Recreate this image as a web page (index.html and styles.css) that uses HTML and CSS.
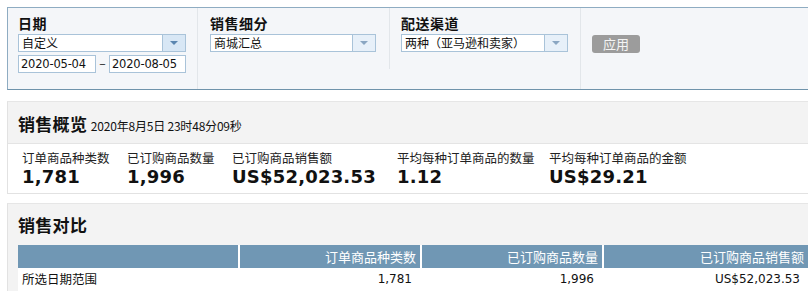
FILE: index.html
```html
<!DOCTYPE html>
<html lang="zh">
<head>
<meta charset="utf-8">
<link rel="stylesheet" href="styles.css">
</head>
<body>
<div class="filters">
  <div class="fcol fcol-date">
    <div class="flabel">日期</div>
    <div class="select w168"><span class="stext">自定义</span><span class="sbtn"><i></i></span></div>
    <div class="dates">
      <span class="dinput">2020-05-04</span>
      <span class="dash">–</span>
      <span class="dinput d2">2020-08-05</span>
    </div>
  </div>
  <div class="fcol fcol-mid">
    <div class="flabel">销售细分</div>
    <div class="select w166"><span class="stext">商城汇总</span><span class="sbtn pale"><i></i></span></div>
  </div>
  <div class="fcol fcol-mid2">
    <div class="flabel">配送渠道</div>
    <div class="select w167"><span class="stext">两种（亚马逊和卖家）</span><span class="sbtn pale"><i></i></span></div>
  </div>
  <div class="fcol fcol-btn">
    <span class="apply">应用</span>
  </div>
</div>

<div class="panel overview">
  <div class="phead">
    <span class="ptitle">销售概览</span>
    <span class="ptime">2020年8月5日 23时48分09秒</span>
  </div>
  <div class="metrics">
    <div class="metric m1"><div class="mlabel">订单商品种类数</div><div class="mval">1,781</div></div>
    <div class="metric m2"><div class="mlabel">已订购商品数量</div><div class="mval">1,996</div></div>
    <div class="metric m3"><div class="mlabel">已订购商品销售额</div><div class="mval">US$52,023.53</div></div>
    <div class="metric m4"><div class="mlabel">平均每种订单商品的数量</div><div class="mval">1.12</div></div>
    <div class="metric m5"><div class="mlabel">平均每种订单商品的金额</div><div class="mval">US$29.21</div></div>
  </div>
</div>

<div class="panel compare">
  <div class="chead"><span class="ptitle">销售对比</span></div>
  <div class="ctable">
    <div class="crow hrow">
      <div class="cc c0"></div>
      <div class="cc c1">订单商品种类数</div>
      <div class="cc c2">已订购商品数量</div>
      <div class="cc c3">已订购商品销售额</div>
    </div>
    <div class="crow drow">
      <div class="cc c0">所选日期范围</div>
      <div class="cc c1">1,781</div>
      <div class="cc c2">1,996</div>
      <div class="cc c3">US$52,023.53</div>
    </div>
  </div>
</div>
</body>
</html>
```

FILE: styles.css
```css
html, body {
  margin: 0;
  padding: 0;
  background: #fff;
  overflow: hidden;
}
body {
  width: 808px;
  height: 291px;
  padding: 7px 0 0 7px;
  box-sizing: border-box;
  font-family: "Noto Sans CJK SC", "DejaVu Sans", sans-serif;
  color: #111;
}
.filters {
  display: flex;
  width: 840px;
  height: 83px;
  box-sizing: border-box;
  background: #f4f6f9;
  border-top: 1px solid #8eacc2;
  border-bottom: 1px solid #6f93ab;
  border-left: 1px solid #8eacc2;
}
.fcol {
  box-sizing: border-box;
  padding: 5px 0 0 10px;
  border-right: 1px solid #e2e6ea;
}
.fcol-date { width: 190px; }
.fcol-mid { width: 192px; padding-left: 12px; height: 61px; border-right: 1px solid #e2e6ea; }
.fcol-mid2 { width: 191px; padding-left: 11px; }
.fcol-btn { border-right: none; padding: 22px 0 0 11px; }
.flabel {
  font-size: 14px;
  font-weight: bold;
  line-height: 20px;
  height: 21px;
  letter-spacing: 0.5px;
}
.select {
  display: flex;
  height: 18px;
  box-sizing: border-box;
  background: #fff;
  border: 1px solid #a9c3d9;
}
.w168 { width: 168px; }
.w166 { width: 166px; }
.w167 { width: 167px; }
.stext {
  flex: 1;
  font-size: 12px;
  line-height: 16px;
  padding-left: 3px;
  white-space: nowrap;
  overflow: hidden;
}
.sbtn {
  width: 22px;
  background: #d8e7f5;
  border-left: 1px solid #a9c3d9;
  display: flex;
  align-items: center;
  justify-content: center;
}
.sbtn.pale { background: #e7f0f9; }
.sbtn i {
  width: 0;
  height: 0;
  border-left: 4px solid transparent;
  border-right: 4px solid transparent;
  border-top: 4px solid #5b86b0;
}
.sbtn.pale i { border-top-color: #8aa6c2; }
.dates {
  display: flex;
  align-items: center;
  margin-top: 3px;
}
.dinput {
  display: inline-block;
  width: 78px;
  height: 18px;
  box-sizing: border-box;
  background: #fff;
  border: 1px solid #a9c3d9;
  font-family: "DejaVu Sans", sans-serif;
  font-size: 11.5px;
  line-height: 16px;
  padding-left: 2px;
  letter-spacing: -0.2px;
}
.dinput.d2 { width: 77px; }
.dash {
  width: 13px;
  height: 18px;
  text-align: center;
  font-size: 12px;
  line-height: 16px;
}
.apply {
  display: inline-block;
  width: 48px;
  height: 18px;
  border-radius: 3px;
  background: #9c9c9c;
  color: #f4f4f4;
  font-size: 13px;
  line-height: 18px;
  text-align: center;
}
.panel {
  width: 840px;
  box-sizing: border-box;
  border-left: 1px solid #e2e2e2;
  border-top: 1px solid #e6e6e6;
}
.overview {
  margin-top: 11px;
  border-bottom: 1px solid #e2e2e2;
}
.phead {
  height: 42px;
  box-sizing: border-box;
  background: #f3f3f3;
  border-bottom: 1px solid #e4e4e4;
  padding: 10px 0 0 10px;
  white-space: nowrap;
}
.ptitle {
  font-size: 17px;
  font-weight: bold;
  line-height: 24px;
  letter-spacing: 0.3px;
}
.ptime {
  font-size: 12px;
  letter-spacing: -0.2px;
}
.metrics {
  display: flex;
  height: 49px;
  padding: 5px 0 0 14px;
  box-sizing: border-box;
  background: #fff;
}
.metric { white-space: nowrap; }
.m1 { width: 105px; }
.m2 { width: 105px; }
.m3 { width: 165px; }
.m4 { width: 152px; }
.mlabel {
  font-size: 12.5px;
  line-height: 17px;
  color: #222;
}
.mval {
  font-family: "DejaVu Sans", sans-serif;
  font-weight: bold;
  font-size: 18px;
  line-height: 22px;
  letter-spacing: 0.2px;
  color: #111;
}
.compare {
  margin-top: 9px;
  background: #f3f3f3;
  height: 100px;
  padding: 0 0 0 10px;
}
.chead {
  height: 41px;
  padding-top: 9px;
  box-sizing: border-box;
}
.ctable { width: 830px; }
.crow {
  display: flex;
  gap: 2px;
}
.hrow {
  background: #fff;
  height: 23px;
}
.hrow .cc {
  background: #7097b4;
  color: #fff;
  font-size: 13px;
  line-height: 23px;
  padding-right: 4px;
}
.drow {
  background: #fff;
  height: 23px;
}
.drow .cc {
  background: #fff;
  font-size: 12.5px;
  line-height: 22px;
  padding-right: 8px;
}
.drow .c1, .drow .c2, .drow .c3 {
  font-family: "DejaVu Sans", sans-serif;
  font-size: 12px;
}
.cc {
  box-sizing: border-box;
  text-align: right;
  white-space: nowrap;
}
.c0 { width: 220px; text-align: left; padding-left: 4px; }
.drow .c0 { padding-left: 4px; }
.c1 { width: 180px; }
.c2 { width: 180px; }
.c3 { width: 204px; }
```
